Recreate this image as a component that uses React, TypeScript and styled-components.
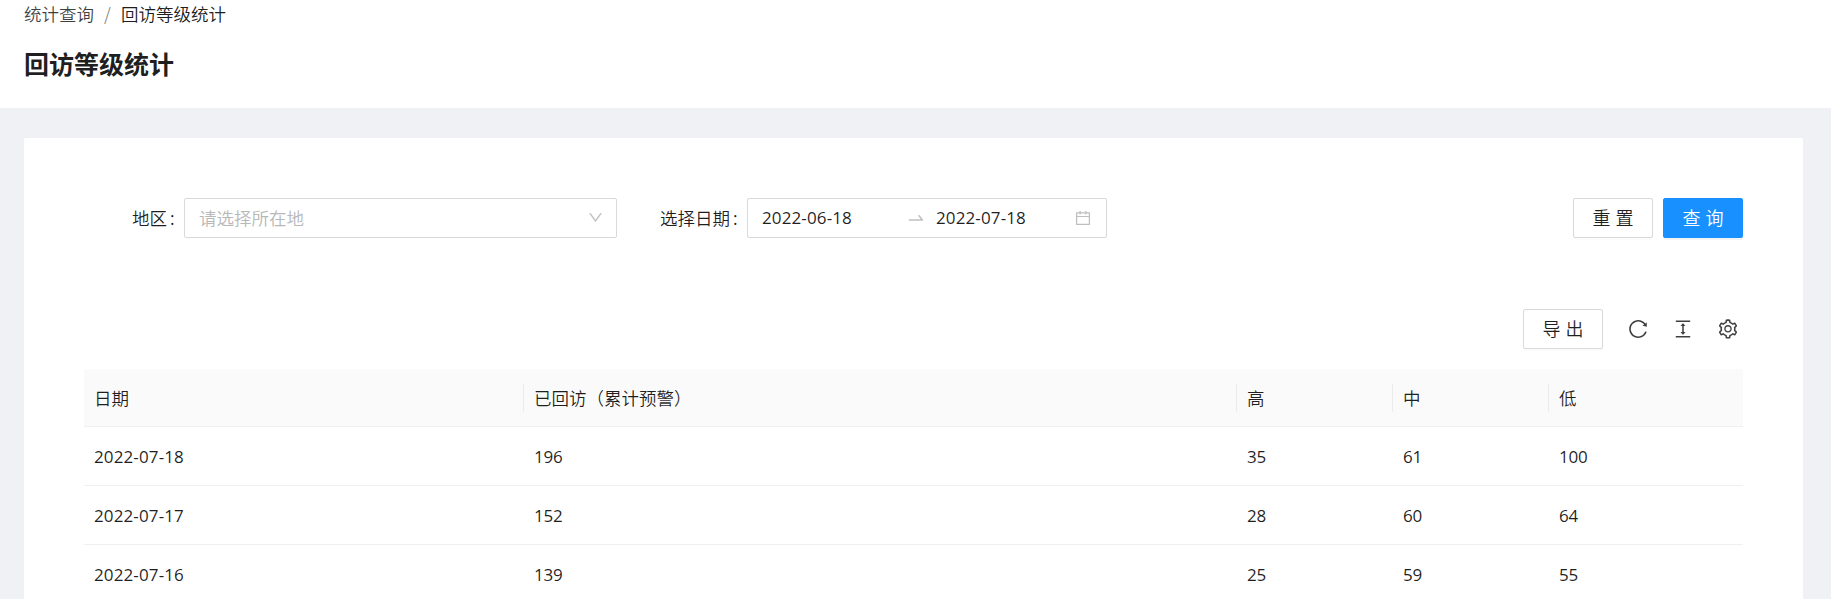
import React from "react";
import styled, { createGlobalStyle, css } from "styled-components";
import {
  AiOutlineCalendar,
  AiOutlineColumnHeight,
  AiOutlineDown,
  AiOutlineReload,
  AiOutlineSetting,
  AiOutlineSwapRight,
} from "react-icons/ai";

const GlobalStyle = createGlobalStyle`
  *, *::before, *::after { box-sizing: border-box; }
  html, body { margin: 0; height: 100%; overflow: hidden; }
  #root { height: 100%; }
  body {
    background: #f0f1f5;
    color: rgba(0, 0, 0, 0.88);
    font-family: "Open Sans", "Noto Sans CJK SC", sans-serif;
    font-size: 17.5px;
    line-height: 28px;
  }
`;

const Page = styled.div`
  height: 100%;
  overflow: hidden;
`;

const PageHeader = styled.header`
  height: 108px;
  padding: 0 24px;
  background: #fff;
`;

const Breadcrumb = styled.nav`
  display: flex;
  height: 28px;
  font-family: "Noto Sans CJK SC", sans-serif;
  font-weight: 350;
`;

const Crumb = styled.span<{ $current?: boolean }>`
  color: ${(p) => (p.$current ? "rgba(0, 0, 0, 0.9)" : "rgba(0, 0, 0, 0.75)")};
`;

const CrumbSlash = styled.span`
  width: 27px;
  text-align: center;
  color: rgba(0, 0, 0, 0.5);
`;

const Title = styled.h1`
  margin: 15px 0 0;
  font-family: "Noto Sans CJK SC", sans-serif;
  font-size: 25px;
  font-weight: 700;
  line-height: 40px;
`;

const Card = styled.main`
  margin: 30px 28px 0 24px;
  height: 500px;
  padding: 60px 60px 0;
  background: #fff;
  border-radius: 2px;
`;

const FilterBar = styled.section`
  display: flex;
  align-items: center;
  height: 40px;
  padding-left: 48px;
`;

const Label = styled.label<{ $width: number }>`
  display: flex;
  width: ${(p) => p.$width}px;
  flex: none;
  font-weight: 350;
`;

const Colon = styled.span`
  margin-left: 3px;
  font-weight: 400;
`;

const field = css`
  display: flex;
  align-items: center;
  height: 40px;
  border: 1px solid #d9d9d9;
  border-radius: 2px;
  background: #fff;
`;

const Select = styled.div`
  ${field}
  justify-content: space-between;
  width: 433px;
  margin-right: 43px;
  padding: 0 12px 0 14px;
  color: #b8b8b8;
  font-weight: 350;

  svg { margin-top: -2px; font-size: 17px; color: #bfbfbf; }
`;

const RangePicker = styled.div`
  ${field}
  width: 360px;
  padding: 0 14px;

  svg { color: #bfbfbf; flex: none; }
`;

const DateText = styled.span`
  font-size: 17px;
  letter-spacing: 0.12px;
`;

const RangeDate = styled(DateText)<{ $width: number }>`
  width: ${(p) => p.$width}px;
`;

const RangeArrow = styled.span`
  display: flex;
  width: 30px;
`;

const Button = styled.button<{ $primary?: boolean }>`
  width: 80px;
  height: 40px;
  padding: 0 0 2px;
  border: 1px solid ${(p) => (p.$primary ? "#1890ff" : "#d9d9d9")};
  border-radius: 2px;
  background: ${(p) => (p.$primary ? "#1890ff" : "#fff")};
  box-shadow: 0 2px 0 rgba(0, 0, 0, ${(p) => (p.$primary ? 0.045 : 0.016)});
  color: ${(p) => (p.$primary ? "#fff" : "rgba(0, 0, 0, 0.88)")};
  font: 350 18px/28px "Noto Sans CJK SC", sans-serif;
  letter-spacing: 5px;
  text-indent: 5px;
`;

const Actions = styled.div`
  display: flex;
  gap: 10px;
  margin-left: auto;
`;

const Toolbar = styled.section`
  display: flex;
  align-items: center;
  justify-content: flex-end;
  height: 40px;
  margin: 71px 0 20px;
`;

const Tools = styled.div`
  display: flex;
  gap: 23px;
  margin: 0 4px 0 24px;
  font-size: 22px;
  color: rgba(0, 0, 0, 0.75);

  svg { display: block; }
`;

const Table = styled.table`
  width: 100%;
  table-layout: fixed;
  border-collapse: separate;
  border-spacing: 0;
`;

const HeadCell = styled.th`
  height: 58px;
  padding: 0;
  background: #fafafa;
  border-bottom: 1px solid #f0f0f0;
  font-weight: 350;
  text-align: left;

  &:first-child { border-top-left-radius: 2px; }
  &:last-child { border-top-right-radius: 2px; }
`;

const HeadLabel = styled.div<{ $divided: boolean }>`
  height: 28px;
  padding-left: 10px;
  border-left: 1px solid ${(p) => (p.$divided ? "#ebebeb" : "transparent")};
  margin-left: -1px;
`;

const Cell = styled.td`
  height: 59px;
  padding: 1px 0 0 10px;
  border-bottom: 1px solid #f0f0f0;
  font-size: 17px;
`;

const Count = styled.span`
  letter-spacing: -0.2px;
`;

const columns = [
  { title: "日期", width: 440 },
  { title: "已回访（累计预警）", width: 713 },
  { title: "高", width: 156 },
  { title: "中", width: 156 },
  { title: "低", width: 194 },
];

const rows = [
  { date: "2022-07-18", counts: [196, 35, 61, 100] },
  { date: "2022-07-17", counts: [152, 28, 60, 64] },
  { date: "2022-07-16", counts: [139, 25, 59, 55] },
];

export default function App() {
  return (
    <Page>
      <GlobalStyle />
      <PageHeader>
        <Breadcrumb>
          <Crumb>统计查询</Crumb>
          <CrumbSlash>/</CrumbSlash>
          <Crumb $current>回访等级统计</Crumb>
        </Breadcrumb>
        <Title>回访等级统计</Title>
      </PageHeader>
      <Card>
        <FilterBar>
          <Label $width={52}>
            地区<Colon>:</Colon>
          </Label>
          <Select>
            请选择所在地
            <AiOutlineDown />
          </Select>
          <Label $width={87}>
            选择日期<Colon>:</Colon>
          </Label>
          <RangePicker>
            <RangeDate $width={144}>2022-06-18</RangeDate>
            <RangeArrow>
              <AiOutlineSwapRight size={20} />
            </RangeArrow>
            <RangeDate $width={138}>2022-07-18</RangeDate>
            <AiOutlineCalendar size={18} />
          </RangePicker>
          <Actions>
            <Button>重置</Button>
            <Button $primary>查询</Button>
          </Actions>
        </FilterBar>
        <Toolbar>
          <Button>导出</Button>
          <Tools>
            <AiOutlineReload />
            <AiOutlineColumnHeight />
            <AiOutlineSetting />
          </Tools>
        </Toolbar>
        <Table>
          <colgroup>
            {columns.map((c) => (
              <col key={c.title} width={c.width} />
            ))}
          </colgroup>
          <thead>
            <tr>
              {columns.map((c, i) => (
                <HeadCell key={c.title}>
                  <HeadLabel $divided={i > 0}>{c.title}</HeadLabel>
                </HeadCell>
              ))}
            </tr>
          </thead>
          <tbody>
            {rows.map((row) => (
              <tr key={row.date}>
                <Cell>
                  <DateText>{row.date}</DateText>
                </Cell>
                {row.counts.map((n, i) => (
                  <Cell key={i}>
                    <Count>{n}</Count>
                  </Cell>
                ))}
              </tr>
            ))}
          </tbody>
        </Table>
      </Card>
    </Page>
  );
}
